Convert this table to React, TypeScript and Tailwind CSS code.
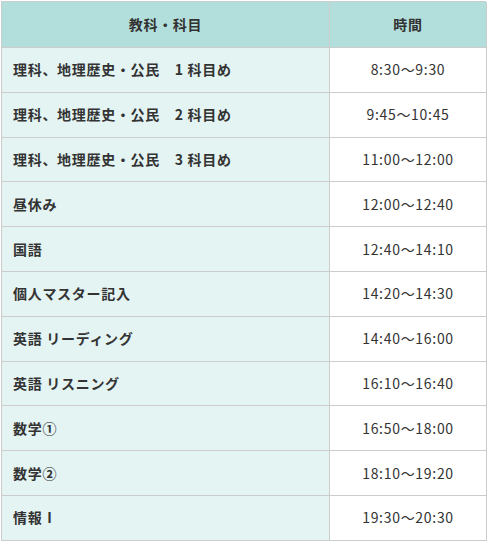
import React from "react";

const rows = [
  { subject: "理科、地理歴史・公民　1 科目め", time: "8:30〜9:30" },
  { subject: "理科、地理歴史・公民　2 科目め", time: "9:45〜10:45" },
  { subject: "理科、地理歴史・公民　3 科目め", time: "11:00〜12:00" },
  { subject: "昼休み", time: "12:00〜12:40" },
  { subject: "国語", time: "12:40〜14:10" },
  { subject: "個人マスター記入", time: "14:20〜14:30" },
  { subject: "英語 リーディング", time: "14:40〜16:00" },
  { subject: "英語 リスニング", time: "16:10〜16:40" },
  { subject: "数学①", time: "16:50〜18:00" },
  { subject: "数学②", time: "18:10〜19:20" },
  { subject: "情報Ⅰ", time: "19:30〜20:30" },
];

export default function App() {
  return (
    <div className="min-h-screen bg-white pt-px pl-px text-[14px] tracking-[0.05em] text-[#333] [font-family:'Noto_Sans_CJK_JP','Noto_Sans',sans-serif]">
      <div className="grid w-[485px] grid-cols-[328px_157px] border-l border-t border-[#ccc]">
        {/* header */}
        <div className="flex h-[46px] items-center justify-center border-b border-r border-[#ccc] bg-[#b2dfdb] font-bold">
          教科・科目
        </div>
        <div className="flex h-[46px] items-center justify-center border-b border-r border-[#ccc] bg-[#b2dfdb] font-bold">
          時間
        </div>

        {rows.map((row) => (
          <React.Fragment key={row.time}>
            <div className="flex h-[44.8px] items-center border-b border-r border-[#ccc] bg-[#e4f4f2] pl-[11px] font-bold">
              {row.subject}
            </div>
            <div className="flex h-[44.8px] items-center justify-center border-b border-r border-[#ccc] bg-white">
              {row.time}
            </div>
          </React.Fragment>
        ))}
      </div>
    </div>
  );
}
